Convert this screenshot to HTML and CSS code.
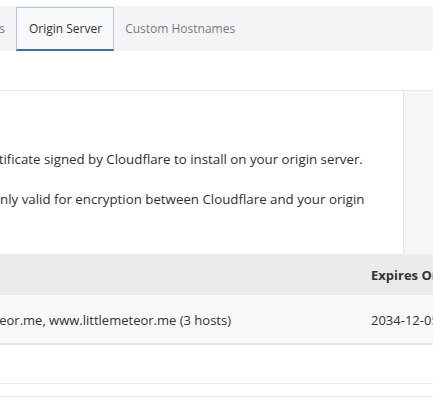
FILE: index.html
```html
<!DOCTYPE html>
<html>
<head>
<meta charset="utf-8">
<link rel="stylesheet" href="styles.css">
</head>
<body>
<div class="page">
  <nav class="tabs">
    <div class="tab tab-clipped"><span>Edge Certificates</span></div>
    <div class="tab tab-active">Origin Server</div>
    <div class="tab">Custom Hostnames</div>
  </nav>
  <section class="card">
    <div class="card-main">
      <div class="card-text">
        <p class="line">Generate a free TLS certificate signed by Cloudflare to install on your origin server.</p>
        <p class="line">Origin Certificates are only valid for encryption between Cloudflare and your origin</p>
      </div>
    </div>
    <aside class="card-side"></aside>
  </section>
  <div class="table">
    <div class="tr th">
      <div class="td hosts">Hosts</div>
      <div class="td expires">Expires On</div>
    </div>
    <div class="tr row">
      <div class="td hosts">*.littlemeteor.me, littlemeteor.me, www.littlemeteor.me (3 hosts)</div>
      <div class="td expires">2034-12-05</div>
    </div>
  </div>
  <div class="gap"></div>
  <div class="footer-line"></div>
</div>
</body>
</html>
```
FILE: styles.css
```css
html, body {
  margin: 0;
  padding: 0;
  background: #ffffff;
}
body {
  width: 433px;
  height: 400px;
  overflow: hidden;
  font-family: "Open Sans", "Noto Sans", sans-serif;
  color: #333333;
}
.page {
  padding-top: 6px;
}
.tabs {
  display: flex;
  height: 45px;
  background: #f4f4f6;
  font-size: 12px;
  white-space: nowrap;
}
.tab {
  display: flex;
  align-items: center;
  padding: 0 11px;
  color: #7a7a7a;
}
.tab-active {
  padding: 0 11px 0 12px;
}
.tab-clipped {
  width: 16px;
  padding: 0;
  box-sizing: border-box;
  padding-right: 11px;
  overflow: hidden;
  justify-content: flex-end;
}
.tab-clipped span {
  flex: none;
}
.tab-active {
  margin-top: 1px;
  box-sizing: border-box;
  background: #f7f9fb;
  border: 1px solid #b3c6d8;
  border-bottom: 2px solid #3f6f96;
  color: #333333;
}
.card {
  margin-top: 39px;
  display: flex;
  height: 163px;
  border-top: 1px solid #e8e8e8;
}
.card-main {
  flex: 1;
  overflow: hidden;
  background: #ffffff;
}
.card-text {
  margin-left: -146px;
  padding-top: 59px;
  font-size: 13.3px;
  white-space: nowrap;
  color: #2f2f2f;
}
.line {
  margin: 0 0 22px;
  line-height: 18px;
}
.card-side {
  width: 29px;
  background: #f6f6f8;
  border-left: 1px solid #e4e4e4;
}
.table {
  font-size: 13px;
  white-space: nowrap;
}
.tr {
  display: flex;
  align-items: center;
}
.th {
  height: 41px;
  background: #ebebeb;
  font-weight: 700;
}
.row {
  height: 47px;
  padding-top: 1px;
  background: #f8f8f8;
  border-bottom: 2px solid #e3e3e3;
}
.td.hosts {
  flex: none;
  width: 371px;
  overflow: hidden;
  display: flex;
  justify-content: flex-end;
}
.row .td.hosts {
  padding-right: 140px;
  box-sizing: border-box;
}
.th .td.hosts {
  visibility: hidden;
}
.td.expires {
  flex: none;
}
.gap {
  height: 38px;
}
.footer-line {
  height: 12px;
  border-top: 1px solid #ececec;
  border-bottom: 1px solid #e6e6e6;
}
```
